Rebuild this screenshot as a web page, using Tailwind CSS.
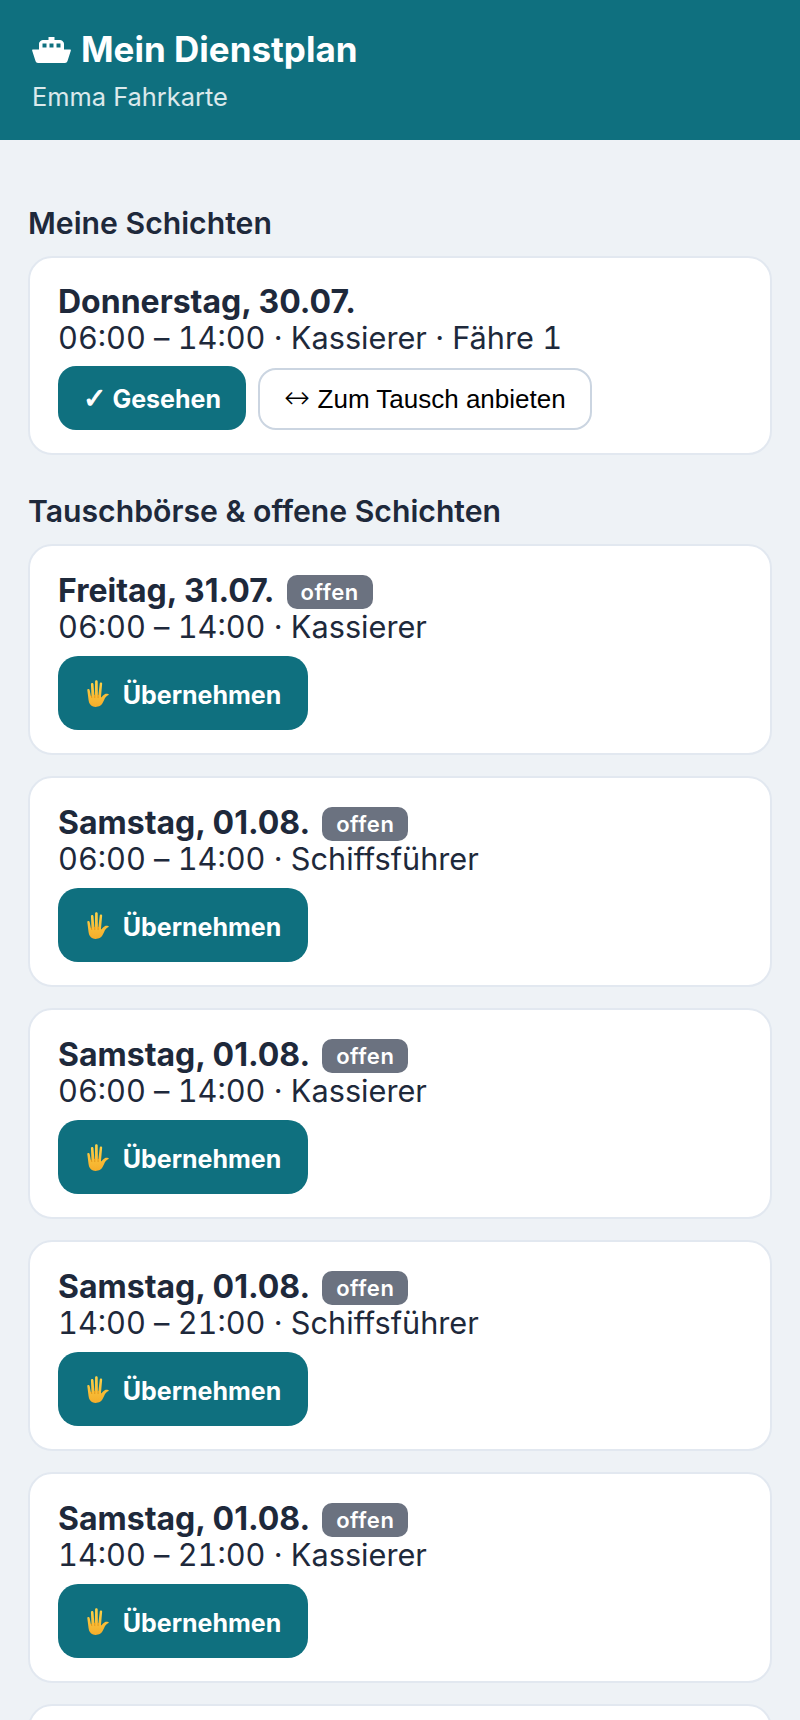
<!DOCTYPE html>
<html lang="de">
<head>
    <meta charset="UTF-8">
    <meta name="viewport" content="width=device-width, initial-scale=1.0">
    <title>Mein Dienstplan</title>
    <script src="https://cdn.jsdelivr.net/npm/@tailwindcss/browser@4"></script>
</head>
<body class="h-[1720px] overflow-hidden bg-[#eef2f6] font-['Inter',sans-serif] text-[#1e293b]">
    <svg class="block w-0 h-0">
        <defs>
            <linearGradient id="handFill" x1="0" y1="0" x2="0" y2="1">
                <stop offset="0" stop-color="#fdd34a"/>
                <stop offset="1" stop-color="#f5ad2a"/>
            </linearGradient>
            <symbol id="hand" viewBox="0 0 24 26">
                <path fill="url(#handFill)" d="M7.2 25.6c-2.6-1-4-3.400-4.300-6.400L1.700 9.600c-.2-1 1.900-1.400 2.200-.2l1.300 6.200.5-.1L5.200 3.900c0-1.400 2.300-1.500 2.400 0l.9 10.600h.5L9.200 1.500c0-1.600 2.500-1.600 2.500 0l.2 13h.5l1.300-11.200c.2-1.500 2.500-1.200 2.300.3l-1.100 12.600.3.700c.8-.9 1.900-2.400 3.300-3.200 1.500-.8 3.600-.3 3.900.3.2.4-.2.600-.8.800-1.400.5-2.800 2.500-3.700 4.400-.9 1.900-2 4.600-3.900 5.700-1.900 1.100-4.800 1.400-6.800.7z"/>
                <path fill="none" stroke="#d98a12" stroke-width=".7" stroke-linecap="round" d="M5.700 15.600 6 17M8.900 14.500v2.500M12.100 14.500v2.500"/>
            </symbol>
        </defs>
    </svg>

    <header class="h-[140px] bg-[#0f707f] pl-[32px] pt-[29px] text-white">
        <h1 class="flex items-center gap-[10px] text-[35px] leading-[40px] font-bold">
            <svg class="w-[39px] h-[26px] mt-[2px]" viewBox="0 0 39 26" fill="#fff">
                <path fill-rule="evenodd" d="M16.500 0h6v3h5c2 0 4.500 1.500 4.500 4v5.500h6c.7 0 1 .5.800 1.200L35.500 24c-.4 1.200-1.300 2-2.500 2H6c-1.200 0-2.100-.8-2.500-2L.2 13.700c-.2-.7.100-1.200.8-1.200h6V7c0-2.500 2.500-4 4.500-4h5V0zM10.500 6.500v4h4v-4h-4zm7 0v4h4v-4h-4zm7 0v4h4v-4h-4z"/>
            </svg>
            Mein Dienstplan
        </h1>
        <p class="mt-[13px] text-[25.400px] leading-[30px] text-white/85">Emma Fahrkarte</p>
    </header>

    <main class="px-[28px] pt-[66px]">
        <h2 class="mb-[16px] text-[30.200px] leading-[34px] font-semibold">Meine Schichten</h2>
        <div class="mb-[39px] rounded-[24px] border-2 border-[#e2e8f0] bg-white px-[28px] pt-[26px] pb-[23px] text-[30.700px] leading-[36px]">
            <div class="text-[32px] font-bold">Donnerstag, 30.07.</div>
            <div class="tabular-nums">06:00 <span class="normal-nums">–</span> 14:00 · Kassierer · Fähre 1</div>
            <div class="mt-[10px] flex items-end gap-[12px]">
                <button class="h-[64px] w-[188px] rounded-[18px] bg-[#0f707f] pt-[1px] text-[25px] font-bold text-white"><span class="font-['DejaVu_Sans',sans-serif] text-[28px] [-webkit-text-stroke:1px_white]">✓</span> Gesehen</button>
                <button class="h-[62px] w-[334px] rounded-[18px] border-2 border-[#cbd5e1] bg-white font-['Liberation_Sans',sans-serif] text-[26px] text-black"><span class="font-['DejaVu_Sans',sans-serif] text-[31px] leading-[26px] font-extralight">↔</span> Zum Tausch anbieten</button>
            </div>
        </div>

        <h2 class="mb-[16px] text-[30.200px] leading-[34px] font-semibold">Tauschbörse &amp; offene Schichten</h2>

        <div class="flex flex-col gap-[21px]">
            <div class="h-[211px] rounded-[24px] border-2 border-[#e2e8f0] bg-white px-[28px] pt-[26px] text-[30.700px] leading-[36px]">
                <div class="flex items-center gap-[12px]"><span class="text-[32px] font-bold">Freitag, 31.07.</span><span class="mt-[3px] rounded-[10px] bg-[#6b7280] px-[14px] py-[1px] text-[22px] leading-[32px] font-semibold tracking-wide text-white">offen</span></div>
                <div class="tabular-nums">06:00 <span class="normal-nums">–</span> 14:00 · Kassierer</div>
                <button class="mt-[11px] flex h-[74px] w-[250px] items-center justify-center gap-[12px] rounded-[20px] bg-[#0f707f] text-[25px] font-bold text-white"><svg class="w-[26px] h-[27px]"><use href="#hand"/></svg><span class="mt-[3px]">Übernehmen</span></button>
            </div>
            <div class="h-[211px] rounded-[24px] border-2 border-[#e2e8f0] bg-white px-[28px] pt-[26px] text-[30.700px] leading-[36px]">
                <div class="flex items-center gap-[12px]"><span class="text-[32px] font-bold">Samstag, 01.08.</span><span class="mt-[3px] rounded-[10px] bg-[#6b7280] px-[14px] py-[1px] text-[22px] leading-[32px] font-semibold tracking-wide text-white">offen</span></div>
                <div class="tabular-nums">06:00 <span class="normal-nums">–</span> 14:00 · Schiffsführer</div>
                <button class="mt-[11px] flex h-[74px] w-[250px] items-center justify-center gap-[12px] rounded-[20px] bg-[#0f707f] text-[25px] font-bold text-white"><svg class="w-[26px] h-[27px]"><use href="#hand"/></svg><span class="mt-[3px]">Übernehmen</span></button>
            </div>
            <div class="h-[211px] rounded-[24px] border-2 border-[#e2e8f0] bg-white px-[28px] pt-[26px] text-[30.700px] leading-[36px]">
                <div class="flex items-center gap-[12px]"><span class="text-[32px] font-bold">Samstag, 01.08.</span><span class="mt-[3px] rounded-[10px] bg-[#6b7280] px-[14px] py-[1px] text-[22px] leading-[32px] font-semibold tracking-wide text-white">offen</span></div>
                <div class="tabular-nums">06:00 <span class="normal-nums">–</span> 14:00 · Kassierer</div>
                <button class="mt-[11px] flex h-[74px] w-[250px] items-center justify-center gap-[12px] rounded-[20px] bg-[#0f707f] text-[25px] font-bold text-white"><svg class="w-[26px] h-[27px]"><use href="#hand"/></svg><span class="mt-[3px]">Übernehmen</span></button>
            </div>
            <div class="h-[211px] rounded-[24px] border-2 border-[#e2e8f0] bg-white px-[28px] pt-[26px] text-[30.700px] leading-[36px]">
                <div class="flex items-center gap-[12px]"><span class="text-[32px] font-bold">Samstag, 01.08.</span><span class="mt-[3px] rounded-[10px] bg-[#6b7280] px-[14px] py-[1px] text-[22px] leading-[32px] font-semibold tracking-wide text-white">offen</span></div>
                <div class="tabular-nums">14:00 <span class="normal-nums">–</span> 21:00 · Schiffsführer</div>
                <button class="mt-[11px] flex h-[74px] w-[250px] items-center justify-center gap-[12px] rounded-[20px] bg-[#0f707f] text-[25px] font-bold text-white"><svg class="w-[26px] h-[27px]"><use href="#hand"/></svg><span class="mt-[3px]">Übernehmen</span></button>
            </div>
            <div class="h-[211px] rounded-[24px] border-2 border-[#e2e8f0] bg-white px-[28px] pt-[26px] text-[30.700px] leading-[36px]">
                <div class="flex items-center gap-[12px]"><span class="text-[32px] font-bold">Samstag, 01.08.</span><span class="mt-[3px] rounded-[10px] bg-[#6b7280] px-[14px] py-[1px] text-[22px] leading-[32px] font-semibold tracking-wide text-white">offen</span></div>
                <div class="tabular-nums">14:00 <span class="normal-nums">–</span> 21:00 · Kassierer</div>
                <button class="mt-[11px] flex h-[74px] w-[250px] items-center justify-center gap-[12px] rounded-[20px] bg-[#0f707f] text-[25px] font-bold text-white"><svg class="w-[26px] h-[27px]"><use href="#hand"/></svg><span class="mt-[3px]">Übernehmen</span></button>
            </div>
            <div class="h-[211px] rounded-[24px] border-2 border-[#e2e8f0] bg-white"></div>
        </div>
    </main>
</body>
</html>
